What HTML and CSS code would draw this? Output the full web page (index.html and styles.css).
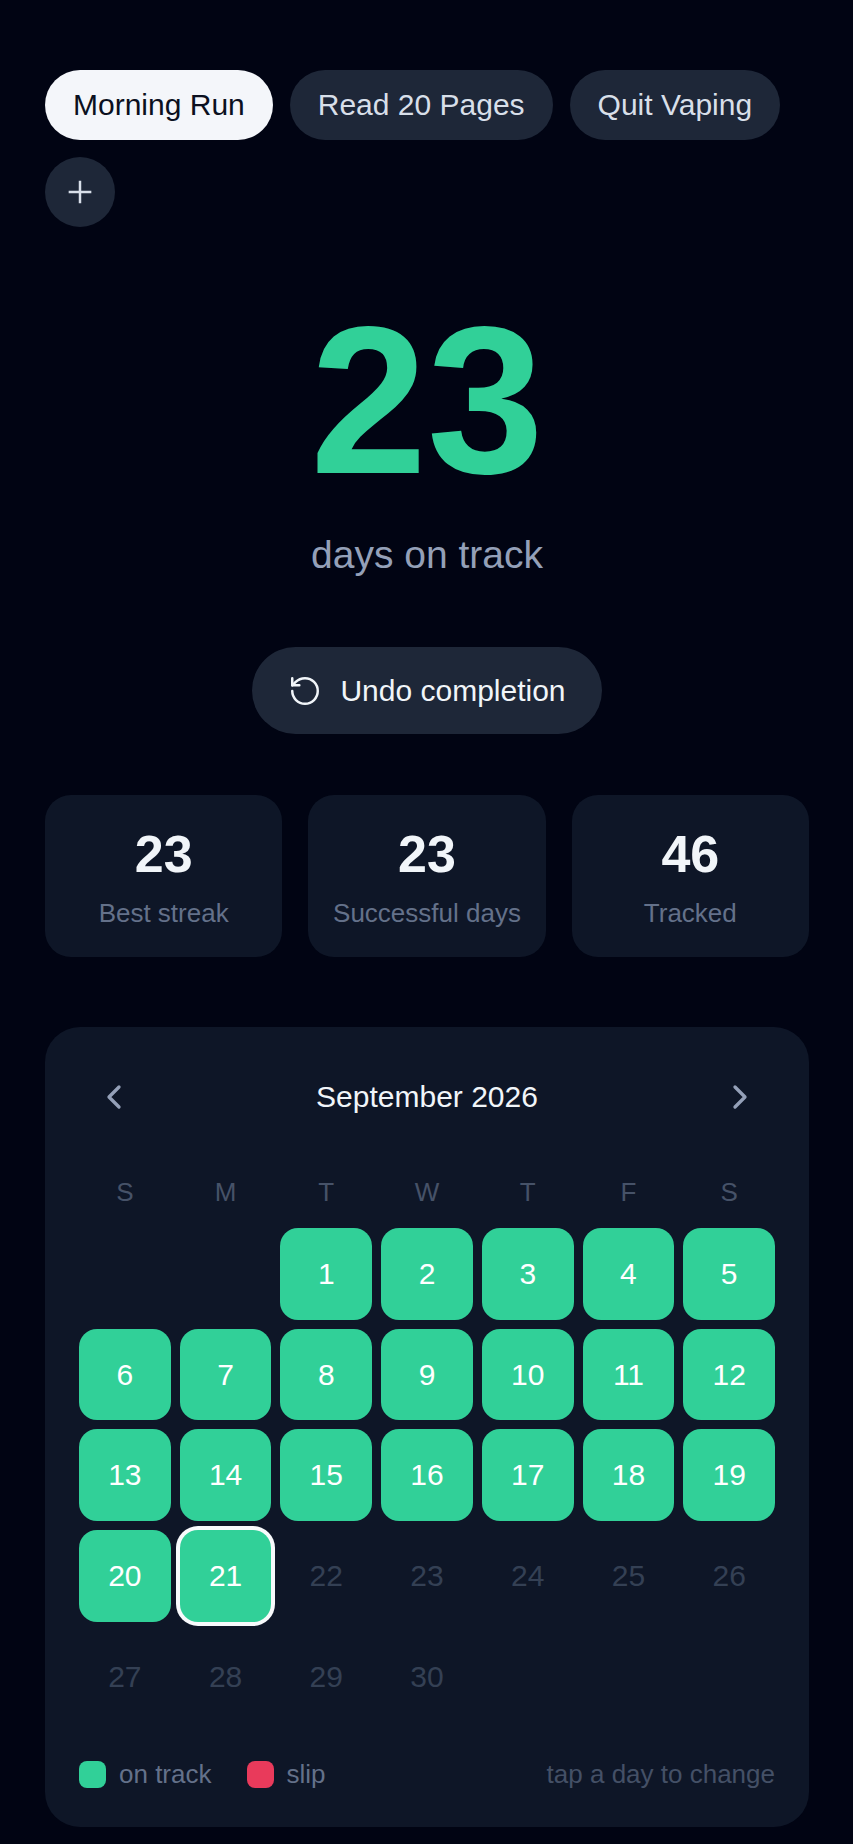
FILE: index.html
```html
<!DOCTYPE html>
<html lang="en">

<head>
    <meta charset="UTF-8">
    <meta name="viewport" content="width=device-width, initial-scale=1.0">
    <title>Habit Tracker</title>
    <link rel="stylesheet" href="styles.css">
</head>

<body>
    <nav class="habits">
        <button class="chip active">Morning Run</button>
        <button class="chip">Read 20 Pages</button>
        <button class="chip">Quit Vaping</button>
        <button class="chip add-btn" aria-label="Add habit">
            <svg class="icon" viewBox="0 0 24 24" stroke-width="1.75"><path d="M4 12h16M12 4v16"/></svg>
        </button>
    </nav>

    <main>
        <section class="streak">
            <div class="streak-count">23</div>
            <p class="streak-label">days on track</p>
            <button class="undo-btn">
                <svg class="icon round" viewBox="0 0 24 24" stroke-width="1.75">
                    <path d="M3 12a9 9 0 1 0 9-9 9.75 9.75 0 0 0-6.74 2.74L3 8"/>
                    <path d="M3 3v5h5"/>
                </svg>
                Undo completion
            </button>
        </section>

        <section class="stats">
            <div class="stat">
                <div class="stat-value">23</div>
                <div class="stat-label">Best streak</div>
            </div>
            <div class="stat">
                <div class="stat-value">23</div>
                <div class="stat-label">Successful days</div>
            </div>
            <div class="stat">
                <div class="stat-value">46</div>
                <div class="stat-label">Tracked</div>
            </div>
        </section>

        <section class="calendar">
            <div class="calendar-header">
                <button class="month-btn" aria-label="Previous month">
                    <svg class="icon round" viewBox="0 0 24 24" stroke-width="2"><path d="M15 18l-6-6 6-6"/></svg>
                </button>
                <h2>September 2026</h2>
                <button class="month-btn" aria-label="Next month">
                    <svg class="icon round" viewBox="0 0 24 24" stroke-width="2"><path d="M9 18l6-6-6-6"/></svg>
                </button>
            </div>

            <div class="weekdays">
                <span>S</span>
                <span>M</span>
                <span>T</span>
                <span>W</span>
                <span>T</span>
                <span>F</span>
                <span>S</span>
            </div>

            <div class="days">
                <!-- the month starts on a Tuesday -->
                <span></span>
                <span></span>
                <button class="day done">1</button>
                <button class="day done">2</button>
                <button class="day done">3</button>
                <button class="day done">4</button>
                <button class="day done">5</button>
                <button class="day done">6</button>
                <button class="day done">7</button>
                <button class="day done">8</button>
                <button class="day done">9</button>
                <button class="day done">10</button>
                <button class="day done">11</button>
                <button class="day done">12</button>
                <button class="day done">13</button>
                <button class="day done">14</button>
                <button class="day done">15</button>
                <button class="day done">16</button>
                <button class="day done">17</button>
                <button class="day done">18</button>
                <button class="day done">19</button>
                <button class="day done">20</button>
                <button class="day done today">21</button>
                <button class="day" disabled>22</button>
                <button class="day" disabled>23</button>
                <button class="day" disabled>24</button>
                <button class="day" disabled>25</button>
                <button class="day" disabled>26</button>
                <button class="day" disabled>27</button>
                <button class="day" disabled>28</button>
                <button class="day" disabled>29</button>
                <button class="day" disabled>30</button>
            </div>

            <div class="legend">
                <span class="legend-item"><span class="swatch done"></span>on track</span>
                <span class="legend-item"><span class="swatch slip"></span>slip</span>
                <span class="hint">tap a day to change</span>
            </div>
        </section>
    </main>
</body>

</html>
```

FILE: styles.css
```css
* {
    box-sizing: border-box;
}

body {
    font-family: "Liberation Sans", Arial, sans-serif;
    font-size: 30px;
    background-color: #010413;
    color: #f1f5f9;
    margin: 0;
    padding: 70px 44px 17px 45px;
}

button {
    font: inherit;
    color: inherit;
    background: none;
    border: none;
    margin: 0;
    padding: 0;
    cursor: pointer;
}

.icon {
    display: block;
    width: 34px;
    height: 34px;
    fill: none;
    stroke: currentColor;
}

.icon.round {
    stroke-linecap: round;
    stroke-linejoin: round;
}

/* Habit switcher */
.habits {
    display: flex;
    flex-wrap: wrap;
    gap: 17px;
}

.chip {
    height: 70px;
    padding: 0 28px;
    border-radius: 35px;
    background-color: #1e2738;
    color: #d8dfe9;
}

.chip.active {
    background-color: #f4f6fa;
    color: #0b1020;
}

.add-btn {
    display: flex;
    align-items: center;
    justify-content: center;
    width: 70px;
    padding: 0;
}

/* Current streak */
.streak {
    display: flex;
    flex-direction: column;
    align-items: center;
    margin-top: 69px;
}

.streak-count {
    font-size: 210px;
    font-weight: bold;
    line-height: 1;
    color: #31d098;
}

.streak-label {
    font-size: 39px;
    line-height: 60px;
    margin: 19px 0 62px;
    color: #94a0b8;
}

.undo-btn {
    display: flex;
    align-items: center;
    gap: 18px;
    height: 87px;
    padding: 0 36px;
    border-radius: 44px;
    background-color: #1e2738;
}

/* Totals */
.stats {
    display: grid;
    grid-template-columns: repeat(3, 1fr);
    gap: 26px;
    margin-top: 61px;
}

.stat {
    padding: 26px 9px;
    border-radius: 26px;
    background-color: #0e1627;
    text-align: center;
}

.stat-value {
    font-size: 52px;
    font-weight: bold;
    line-height: 66px;
}

.stat-label {
    font-size: 26px;
    line-height: 35px;
    margin-top: 9px;
    color: #64718a;
}

/* Month view */
.calendar {
    margin-top: 70px;
    padding: 35px 34px;
    border-radius: 35px;
    background-color: #0e1627;
}

.calendar-header {
    display: flex;
    align-items: center;
    justify-content: space-between;
}

.calendar-header h2 {
    font-size: 30px;
    font-weight: normal;
    margin: 0;
}

.month-btn {
    display: flex;
    align-items: center;
    justify-content: center;
    width: 70px;
    height: 70px;
    color: #94a0b8;
}

.month-btn .icon {
    width: 40px;
    height: 40px;
}

.weekdays,
.days {
    display: grid;
    grid-template-columns: repeat(7, 1fr);
    gap: 9px;
}

.weekdays {
    margin: 43px 0 18px;
    font-size: 26px;
    line-height: 35px;
    text-align: center;
    color: #465268;
}

.day {
    aspect-ratio: 1;
    border-radius: 18px;
    color: #344054;
}

.day.done {
    color: #fff;
}

.day:disabled {
    cursor: default;
}

.done {
    background-color: #31d098;
}

.slip {
    background-color: #e93a5b;
}

.day.today {
    box-shadow: 0 0 0 4px #f8fafc;
}

.legend {
    display: flex;
    align-items: center;
    gap: 35px;
    margin-top: 34px;
    font-size: 26px;
    line-height: 35px;
    color: #64718a;
}

.legend-item {
    display: flex;
    align-items: center;
    gap: 13px;
}

.swatch {
    width: 27px;
    height: 27px;
    border-radius: 8px;
}

.hint {
    margin-left: auto;
    color: #445066;
}
```
